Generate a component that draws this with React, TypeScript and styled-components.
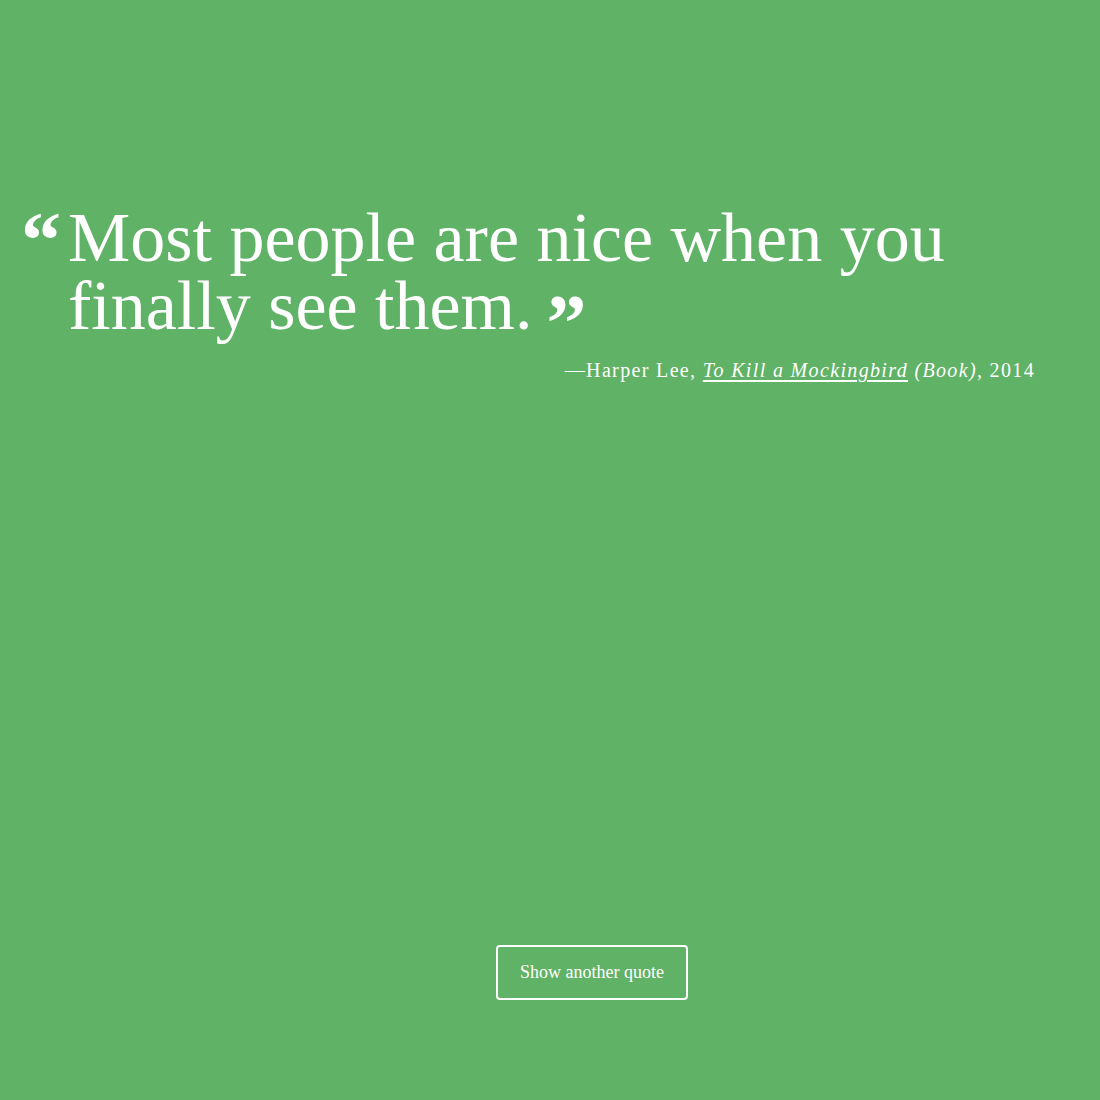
import React from "react";
import styled, { createGlobalStyle } from "styled-components";

const Global = createGlobalStyle`
  html, body { margin: 0; padding: 0; background: #60b266; }
  body { font-family: "Liberation Serif", serif; color: #fff; }
`;

const Page = styled.main`
  width: 1100px;
  height: 1100px;
  background: #60b266;
  display: flex;
  flex-direction: column;
  box-sizing: border-box;
  padding: 204px 65px 0 68px;
`;

const Quote = styled.blockquote`
  position: relative;
  margin: 0;
  font-family: "Liberation Serif", serif;
  font-size: 70px;
  line-height: 68px;
  color: #fff;
`;

const OpenMark = styled.span`
  position: absolute;
  left: -47px;
  top: -4px;
  font-family: "Liberation Serif", serif;
  font-weight: 700;
  font-size: 80px;
  line-height: 80px;
  letter-spacing: -2px;
`;

const CloseMark = styled.span`
  display: inline-block;
  font-family: "Liberation Serif", serif;
  font-weight: 700;
  font-size: 80px;
  line-height: 30px;
  letter-spacing: -2px;
  margin-left: 14px;
  vertical-align: -21px;
`;

const Attribution = styled.p`
  margin: 16px 0 0;
  text-align: right;
  font-family: "Liberation Serif", serif;
  font-size: 20px;
  line-height: 28px;
  letter-spacing: 1.35px;
`;

const Work = styled.a`
  color: #fff;
  font-style: italic;
  text-decoration: underline;
  text-underline-offset: 3px;
`;

const Kind = styled.em`
  font-style: italic;
`;

const Footer = styled.div`
  margin-top: auto;
  padding: 0 0 100px 428px;
  display: flex;
`;

const Button = styled.button`
  width: 192px;
  height: 55px;
  background: transparent;
  border: 2px solid #fff;
  border-radius: 4px;
  color: #fff;
  font-family: "Liberation Serif", serif;
  font-size: 18px;
  cursor: pointer;
`;

export default function App() {
  return (
    <>
      <Global />
      <Page>
        <Quote>
          <OpenMark>“</OpenMark>
          Most people are nice when you finally see them.
          <CloseMark>”</CloseMark>
        </Quote>
        <Attribution>
          —Harper Lee, <Work href="#">To Kill a Mockingbird</Work> <Kind>(Book)</Kind>, 2014
        </Attribution>
        <Footer>
          <Button>Show another quote</Button>
        </Footer>
      </Page>
    </>
  );
}
